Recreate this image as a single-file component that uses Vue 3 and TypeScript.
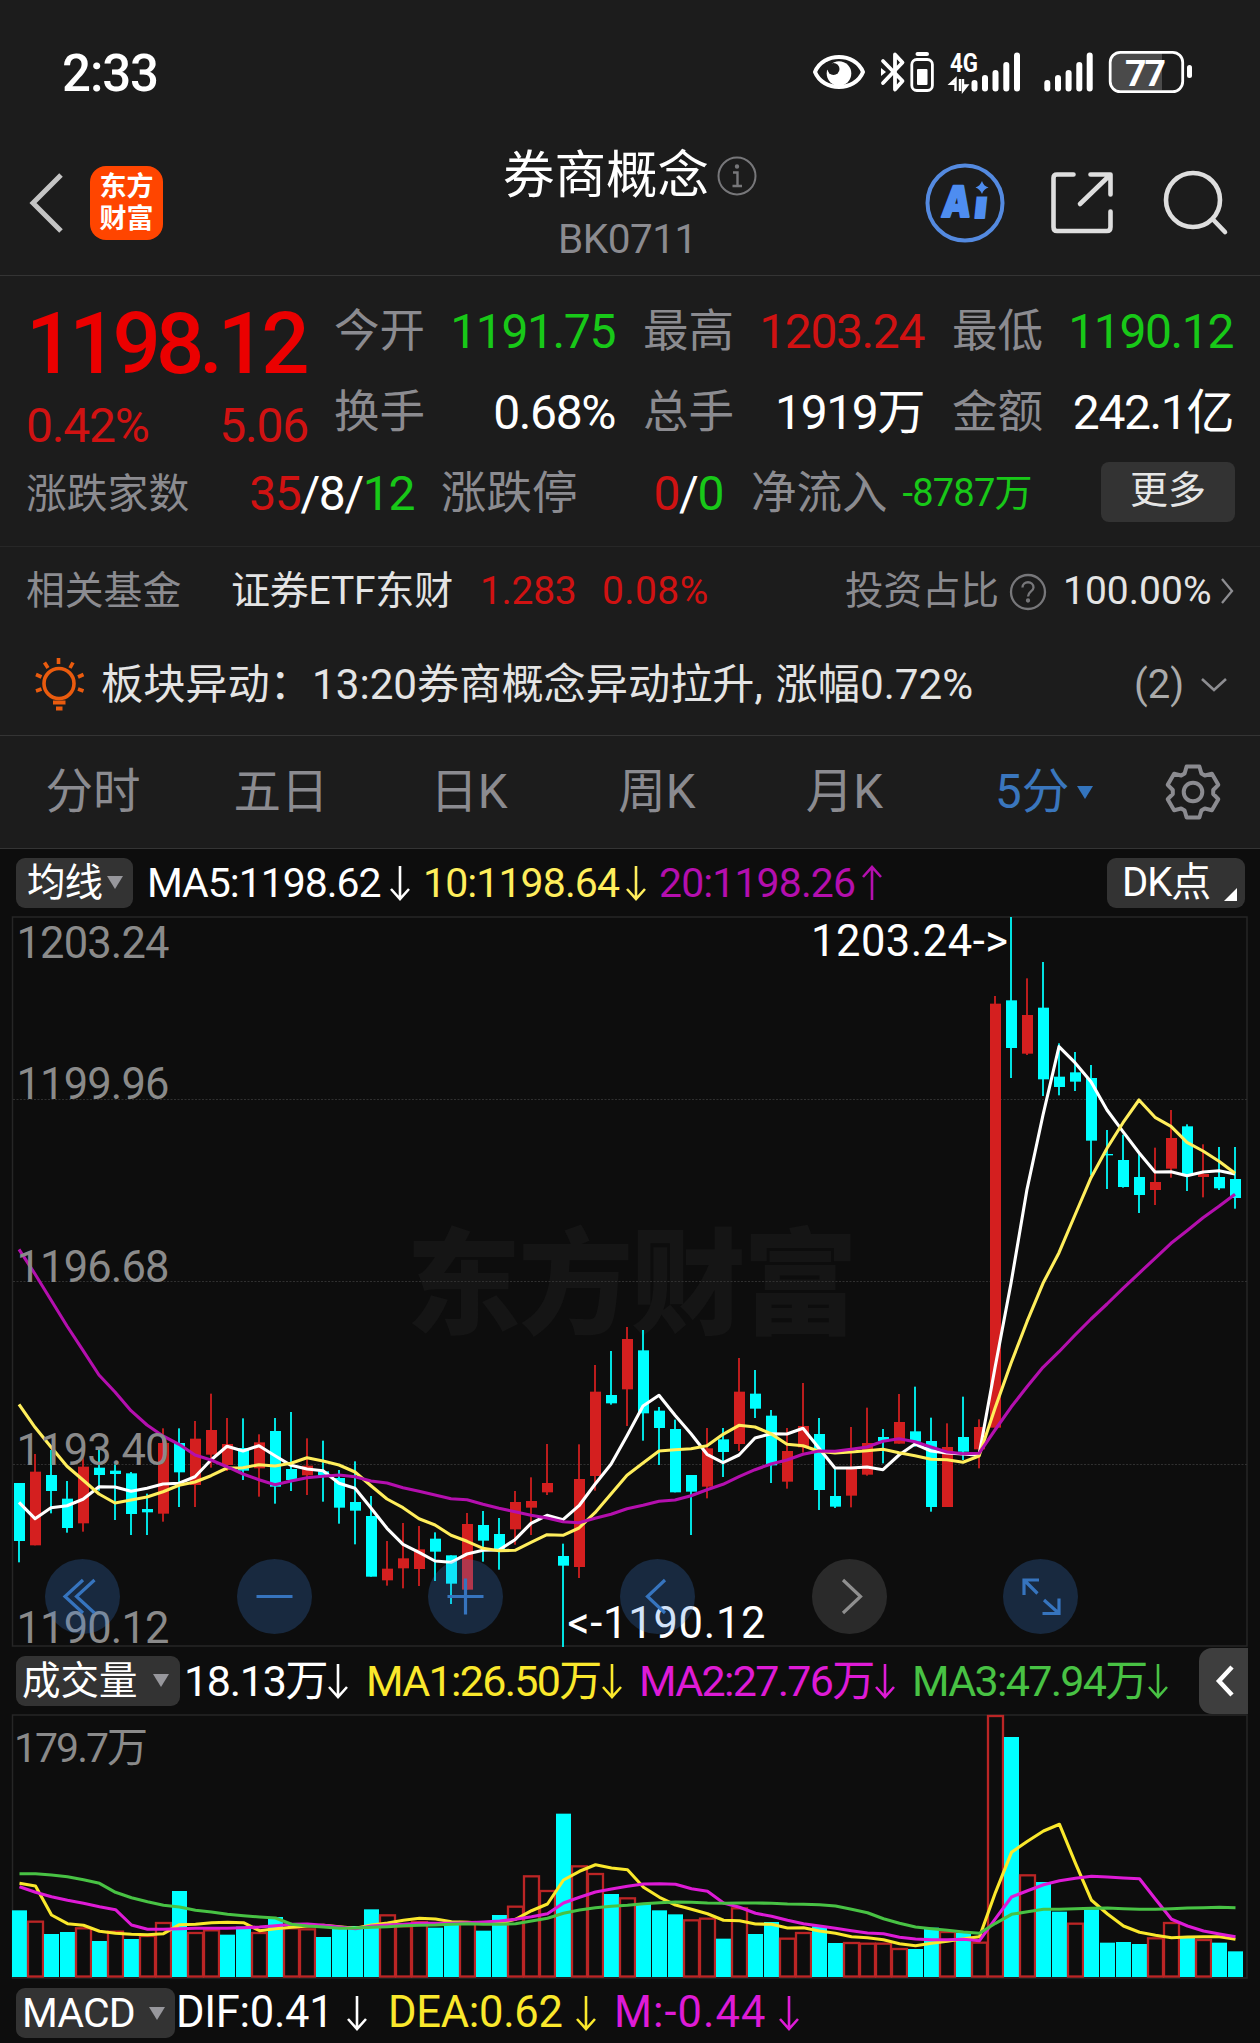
<script setup lang="ts">
import { h, type FunctionalComponent } from 'vue'

type Candle = [up: 0 | 1, high: number, top: number, bottom: number, low: number]

const Arrow: FunctionalComponent<{ up?: boolean }> = (props) =>
  h('svg', { class: 'arrow', viewBox: '0 0 22 36', width: 22, height: 36 }, [
    h('path', {
      d: props.up ? 'M11 35V2M2 12L11 2L20 12' : 'M11 1V34M2 24L11 34L20 24',
      fill: 'none',
      stroke: 'currentColor',
      'stroke-width': 2.6,
    }),
  ])
Arrow.props = { up: Boolean }

const STEP = 16
const candleX = (i: number) => 19 + STEP * i
const volumeX = (i: number) => 19.5 + STEP * i

// Price values are kept in thirds of a pixel, relative to a block's own base line.
const scale = (base: number, values: number[]) => values.map((v) => base + v / 3)

const blocks: { base: number; rows: Candle[] }[] = [
  {
    base: 1220,
    rows: [
      [0, 789, 789, 963, 1027], [1, 702, 755, 976, 976], [0, 690, 765, 813, 880], [0, 783, 836, 924, 938],
      [1, 702, 740, 910, 935], [0, 690, 743, 765, 812], [0, 733, 752, 762, 900], [0, 756, 760, 882, 945],
      [0, 821, 867, 877, 945], [1, 625, 669, 881, 905], [0, 625, 669, 757, 861], [1, 603, 656, 795, 861],
      [1, 521, 630, 704, 743], [1, 594, 672, 735, 753], [0, 595, 684, 752, 780], [1, 643, 667, 745, 830],
      [0, 594, 633, 800, 851], [0, 576, 747, 780, 813], [1, 655, 737, 766, 825], [0, 662, 754, 766, 845],
      [0, 750, 774, 863, 911], [0, 724, 846, 872, 973], [0, 828, 888, 1070, 1070], [1, 963, 1046, 1081, 1097],
      [1, 909, 1015, 1045, 1105],
    ],
  },
  {
    base: 1300,
    rows: [
      [1, 678, 748, 807, 858], [0, 697, 716, 755, 843], [0, 766, 766, 851, 912], [1, 639, 672, 869, 869],
      [0, 633, 675, 722, 785], [0, 654, 702, 750, 809], [1, 573, 606, 688, 734], [1, 532, 603, 623, 705],
      [1, 432, 549, 577, 585], [0, 731, 768, 797, 1041], [1, 433, 537, 801, 834], [1, 195, 275, 528, 572],
      [0, 153, 285, 310, 314], [1, 81, 117, 268, 378], [0, 90, 151, 340, 422], [0, 321, 332, 384, 495],
      [0, 359, 387, 577, 577], [0, 525, 525, 575, 705], [1, 384, 445, 560, 595], [0, 384, 418, 456, 531],
      [1, 174, 275, 432, 453], [0, 210, 281, 326, 354], [0, 330, 347, 496, 549], [1, 384, 453, 545, 566],
      [1, 249, 378, 442, 458], [0, 354, 402, 570, 630], [0, 507, 588, 620, 624], [1, 381, 506, 587, 622],
      [1, 323, 429, 524, 527], [0, 387, 411, 423, 490], [1, 282, 366, 431, 431], [0, 260, 394, 425, 440],
      [0, 353, 423, 621, 635], [1, 370, 441, 621, 621], [0, 290, 411, 455, 480], [1, 358, 381, 448, 505],
    ],
  },
  {
    base: 900,
    rows: [
      [1, 288, 311, 1583, 1583], [0, 51, 301, 444, 534], [1, 235, 345, 461, 465], [0, 186, 323, 538, 588],
      [0, 430, 530, 561, 586], [0, 456, 517, 545, 573], [0, 495, 534, 722, 826], [0, 690, 762, 766, 867],
      [0, 704, 780, 861, 863], [0, 762, 831, 885, 939], [1, 743, 846, 870, 915], [1, 630, 714, 806, 833],
      [0, 673, 679, 822, 873], [1, 733, 822, 831, 892], [0, 741, 831, 865, 870], [0, 741, 837, 894, 926],
    ],
  },
]

const candles = blocks
  .flatMap(({ base, rows }) => rows.map(([up, ...v]) => ({ up: up === 1, v: scale(base, v) })))
  .map(({ up, v }, i) => ({ up, x: candleX(i), high: v[0], top: v[1], bottom: v[2], low: v[3] }))

const toPoints = (ys: number[], x: (i: number) => number) => ys.map((y, i) => `${x(i)},${y.toFixed(1)}`).join(' ')

const priceLines = [
  {
    color: '#ffffff',
    ys: [
      ...scale(1220, [847, 896, 863, 857, 838, 800, 801, 814, 805, 792, 790, 770, 720, 679, 693, 677, 707, 736, 747, 752, 790, 805, 864, 925, 973]),
      ...scale(1300, [757, 783, 787, 762, 751, 750, 719, 670, 646, 659, 617, 553, 493, 407, 318, 286, 346, 401, 463, 488, 465, 414, 401, 402, 385, 445, 504, 504, 501, 509, 465, 432, 453, 459, 462, 466, 203]),
      ...scale(900, [1150, 868, 645, 440, 488, 545, 630, 695, 758, 816, 815, 827, 816, 812, 822]),
    ],
  },
  {
    color: '#ffee5c',
    ys: [
      ...scale(1220, [553, 622, 681, 739, 780, 822, 849, 840, 831, 815, 796, 786, 767, 744, 743, 734, 738, 730, 713, 723, 735, 756, 797, 837, 863]),
      ...scale(1300, [656, 675, 706, 724, 745, 752, 751, 727, 704, 706, 684, 638, 582, 526, 489, 453, 449, 446, 437, 403, 376, 381, 401, 433, 437, 454, 459, 456, 452, 448, 458, 467, 478, 479, 487, 468, 325, 190, 65]),
      ...scale(900, [1150, 1058, 945, 833, 745, 668, 600, 652, 679, 727, 753, 784, 820]),
    ],
  },
  {
    color: '#b40fae',
    ys: [
      ...scale(1220, [88, 162, 240, 318, 391, 465, 516, 572, 615, 648, 673, 705, 720, 740, 762, 779, 794, 783, 773, 769, 765, 770, 783, 789, 803]),
      ...scale(1300, [574, 585, 596, 599, 613, 625, 635, 646, 654, 665, 668, 655, 643, 626, 616, 604, 600, 587, 569, 553, 530, 509, 492, 480, 463, 453, 454, 448, 441, 424, 416, 425, 441, 456, 461, 460, 390, 322, 260, 202, 155, 105, 57, 12]),
      ...scale(900, [1165, 1120, 1075, 1030, 992, 953, 919, 883]),
    ],
  },
].map(({ color, ys }) => ({ color, points: toPoints(ys, candleX) }))

const VOLUME_BASE = 1640
const VOLUME_FLOOR = VOLUME_BASE + 1011 / 3

// Negative entries are rising bars, drawn hollow.
const volumes = [
  811, -842, 882, 876, -862, 903, -872, 897, -885, -846, 753, -876, -868, 884, 860, -876, 831, -862, -865, 891,
  862, 858, 808, -823, -856, -843, 863, 853, -843, 872, 825, -797, -706, -750, 521, -676, -699, 762, -772, 790,
  811, 823, -838, -833, 896, -802, 882, 846, -893, -876, 859, 909, -906, -908, -908, -924, 927, 863, -873, 878,
  -905, -225, 291, -703, 726, 815, -848, 808, 908, 906, 912, -892, -846, 892, -897, 908, 934,
].map((v, i) => ({ up: v < 0, x: volumeX(i), top: VOLUME_BASE + Math.abs(v) / 3 }))

const volumeLines = [
  {
    color: '#fae82c',
    ys: [730, 738, 825, 851, 856, 874, 880, 883, 884, 881, 854, 853, 848, 847, 848, 872, 866, 862, 858, 856, 860, 865, 855, 849, 841, 835, 837, 845, 847, 850, 850, 838, 812, 792, 720, 694, 674, 684, 689, 742, 772, 795, 808, 821, 841, 842, 852, 853, 864, 863, 873, 880, 890, 893, 899, 911, 917, 910, 904, 896, 890, 757, 637, 604, 573, 553, 670, 781, 822, 858, 877, 886, 893, 891, 890, 890, 898],
  },
  {
    color: '#de1bd6',
    ys: [740, 757, 770, 781, 790, 800, 809, 855, 868, 868, 866, 865, 865, 865, 863, 861, 857, 853, 852, 856, 861, 866, 858, 855, 853, 850, 850, 850, 848, 846, 843, 838, 830, 821, 789, 772, 756, 747, 739, 732, 731, 733, 746, 754, 789, 802, 820, 829, 841, 851, 858, 865, 872, 879, 881, 892, 897, 899, 899, 898, 902, 836, 771, 752, 734, 722, 715, 709, 711, 714, 716, 778, 838, 858, 873, 882, 890],
  },
  {
    color: '#48c244',
    ys: [701, 701, 705, 710, 719, 730, 757, 773, 785, 796, 801, 811, 816, 823, 827, 831, 834, 853, 858, 861, 865, 864, 862, 860, 857, 856, 855, 853, 851, 853, 853, 851, 843, 835, 820, 810, 803, 799, 796, 791, 788, 786, 787, 789, 790, 789, 789, 790, 792, 793, 794, 798, 808, 818, 836, 850, 861, 866, 871, 876, 880, 850, 823, 815, 808, 808, 806, 805, 804, 806, 808, 808, 806, 804, 803, 802, 803],
  },
].map(({ color, ys }) => ({ color, points: toPoints(scale(VOLUME_BASE, ys), volumeX) }))

const axis = [
  { text: '1203.24', y: 958 },
  { text: '1199.96', y: 1099 },
  { text: '1196.68', y: 1281.5 },
  { text: '1193.40', y: 1464.5 },
  { text: '1190.12', y: 1643 },
]

const gear = Array.from({ length: 6 }, (_, k) => {
  const a = (k * Math.PI) / 3
  return [[-8.4, -18.5], [-6.4, -25.5], [6.4, -25.5], [8.4, -18.5]]
    .map(([x, y]) => `${(x * Math.cos(a) - y * Math.sin(a)).toFixed(1)},${(x * Math.sin(a) + y * Math.cos(a)).toFixed(1)}`)
    .join(' ')
}).join(' ')

const tabs = ['分时', '五日', '日K', '周K', '月K']

const tools = [
  { name: 'rewind', d: 'M38 21L20 37.500L38 54M49.500 21L31.500 37.500L49.500 54' },
  { name: 'minus', d: 'M19.500 37.500H55.500' },
  { name: 'plus', d: 'M19.500 37.500H55.500M37.500 19.500V55.500' },
  { name: 'prev', d: 'M45 21L27.500 37.500L45 54' },
  { name: 'next', d: 'M31 21L48.500 37.500L31 54' },
  { name: 'expand', d: 'M21 36V21H36M21.500 21.500L34.500 34.500M56 39.500V54.500H39.500M55.500 54L41 41' },
]
</script>

<template>
  <div class="screen">
    <div class="status">
      <span class="clock">2:33</span>
      <svg class="status-icons" width="455" height="70" viewBox="0 0 455 70" fill="none">
        <path d="M10 32C18 12 50 12 58 32C50 52 18 52 10 32Z" stroke="#fff" stroke-width="4" stroke-linejoin="round" />
        <circle cx="34" cy="33.500" r="12.300" fill="#fff" />
        <circle cx="28.500" cy="29" r="6" fill="#1c1c1c" />
        <circle cx="23.500" cy="26" r="4" fill="#1c1c1c" />
        <path d="M78 21L97.500 41L90 49.500V14.500L97.500 22.500L78 43" stroke="#fff" stroke-width="3.800" stroke-linejoin="round" stroke-linecap="round" />
        <path d="M76 28L81 32L76 36Z" fill="#fff" />
        <rect x="110.500" y="12" width="13.500" height="4" rx="2" fill="#fff" />
        <rect x="106.800" y="19.500" width="20.600" height="31" rx="5" stroke="#fff" stroke-width="2.800" />
        <rect x="112" y="29" width="10.500" height="16" rx="1" fill="#fff" />
        <text x="145" y="31.500" font-size="26" font-weight="700" fill="#fff" textLength="28" lengthAdjust="spacingAndGlyphs">4G</text>
        <path d="M150.500 39.500V51L150.500 39L145.500 43.800H150M155 39V51M158 39V50.500L162 45.500H158" stroke="#fff" stroke-width="2.400" />
        <path d="M169.500 43V48.500M180 38V48.500M190.500 33V48.500M201.300 25V48.500M212 15.500V48.500M242.300 43V48.500M253 38V48.500M263.600 33V48.500M274.300 25V48.500M284.700 15.500V48.500" stroke="#fff" stroke-width="6" stroke-linecap="round" />
        <path d="M312 13H357V50H312Q306.500 50 306.500 43V20Q306.500 13 312 13Z" fill="#4a4a4a" />
        <rect x="305.200" y="12.300" width="72.500" height="39.300" rx="10" stroke="#fff" stroke-width="2.800" />
        <rect x="382" y="25" width="5" height="13" rx="2.500" fill="#fff" />
        <text x="320" y="46" font-size="37.500" font-weight="700" fill="#fff" textLength="41">77</text>
      </svg>
    </div>

    <header class="top">
      <svg class="back" width="38" height="64" viewBox="0 0 38 64"><path d="M33 4L5 32L33 60" fill="none" stroke="#c4c4c4" stroke-width="5" /></svg>
      <div class="logo"><span>东方</span><span>财富</span></div>
      <div class="heading">
        <div class="title">
          <span>券商概念</span>
          <svg width="40" height="40" viewBox="0 0 40 40" fill="none" stroke="#77777a" stroke-width="2">
            <circle cx="20" cy="20" r="18.500" />
            <path d="M16 16.500H20.500V29.500M15.500 30H25" stroke-width="2.400" />
            <circle cx="20" cy="10.500" r="1.200" fill="#77777a" />
          </svg>
        </div>
        <div class="code">BK0711</div>
      </div>
      <svg class="actions" width="310" height="80" viewBox="0 0 310 80" fill="none">
        <circle cx="45" cy="40" r="37.500" stroke="#548ae0" stroke-width="4" />
        <g transform="translate(5.500 0) skewX(-6)" fill="#4e8df0" stroke="#4e8df0" stroke-width="2" stroke-linejoin="round" font-family="Inter" font-weight="900" font-size="43">
          <text x="21" y="54" textLength="29" lengthAdjust="spacingAndGlyphs">A</text>
          <text x="53.500" y="55.500" textLength="13" lengthAdjust="spacingAndGlyphs">i</text>
        </g>
        <rect x="53" y="17" width="17" height="16.500" fill="#1c1c1c" />
        <path d="M62 18Q63.500 23 68.500 24.500Q63.500 26 62 31Q60 26 55.500 24.500Q60 23 62 18Z" fill="#4e8df0" />
        <g stroke="#dedede" stroke-width="4.600" stroke-linecap="round" stroke-linejoin="round">
          <path d="M153.500 11.500H137Q133.500 11.500 133.500 15V64Q133.500 68 137 68H187Q190.500 68 190.500 64V48.500M170.500 11.500H190.500V31.500M189 13L160 41" />
          <circle cx="273" cy="37" r="27" />
          <path d="M293 56.500L305 69" />
        </g>
      </svg>
    </header>

    <section class="quote">
      <div class="quote-main">
        <div class="last">
          <div class="price">1198.12</div>
          <div class="change"><span>0.42%</span><span>5.06</span></div>
        </div>
        <div class="facts">
          <div class="fact"><label>今开</label><b class="green">1191.75</b></div>
          <div class="fact"><label>最高</label><b class="red">1203.24</b></div>
          <div class="fact"><label>最低</label><b class="green">1190.12</b></div>
          <div class="fact"><label>换手</label><b>0.68%</b></div>
          <div class="fact"><label>总手</label><b>1919万</b></div>
          <div class="fact"><label>金额</label><b>242.1亿</b></div>
        </div>
      </div>
      <div class="quote-more">
        <div class="fact breadth"><label>涨跌家数</label><b><i class="red">35</i>/8/<i class="green">12</i></b></div>
        <div class="fact limits"><label>涨跌停</label><b><i class="red">0</i>/<i class="green">0</i></b></div>
        <div class="fact inflow"><label>净流入</label><b class="green">-8787万</b></div>
        <button class="more">更多</button>
      </div>
    </section>

    <section class="fund">
      <span class="muted fund-label">相关基金</span>
      <span class="fund-name">证券ETF东财</span>
      <span class="red fund-price">1.283</span>
      <span class="red fund-rate">0.08%</span>
      <span class="muted fund-ratio">投资占比</span>
      <svg class="help" width="38" height="38" viewBox="0 0 38 38" fill="none" stroke="#77777a" stroke-width="2.300">
        <circle cx="19" cy="19" r="17" />
        <path d="M13.500 14.500C13.500 7.500 24.500 7.500 24.500 14.500C24.500 18.500 19 18.500 19 23.500" />
        <circle cx="19" cy="27.500" r="1" />
      </svg>
      <span class="fund-share">100.00%</span>
      <svg class="go" width="14" height="28" viewBox="0 0 14 28"><path d="M2 2L12 14L2 26" fill="none" stroke="#8d8d91" stroke-width="2.300" /></svg>
    </section>

    <section class="alert">
      <svg class="bulb" width="50" height="56" viewBox="0 0 50 56" fill="none" stroke="#ea5b0e" stroke-width="3.600">
        <circle cx="24" cy="26.500" r="15" />
        <path d="M23.500 1V7M9.500 5.500L13 11M38 5.500L35 11M1 17.500L6.500 20M48.500 17.500L43 20M1 34L6.500 32M48.500 34L43 32" />
        <path d="M18 45.500H30.500M21 51.500H27.500" stroke-width="3.800" />
      </svg>
      <span class="alert-tag">板块异动：</span>
      <span class="alert-text">13:20券商概念异动拉升<em>,</em>涨幅0.72%</span>
      <span class="alert-count">(2)</span>
      <svg width="28" height="18" viewBox="0 0 28 18"><path d="M2 3L14 14L26 3" fill="none" stroke="#8d8d91" stroke-width="2.600" /></svg>
    </section>

    <nav class="tabs">
      <span v-for="tab in tabs" :key="tab" class="tab">{{ tab }}</span>
      <span class="tab active">5分<svg width="16" height="13" viewBox="0 0 16 13"><path d="M0 0H16L8 13Z" fill="#3374bd" /></svg></span>
      <svg class="gear" width="60" height="60" viewBox="-30 -30 60 60" fill="none" stroke="#8b8b90" stroke-width="4">
        <polygon :points="gear" stroke-linejoin="round" />
        <circle r="9.300" />
      </svg>
    </nav>

    <section class="charts">
      <div class="legend ma">
        <span class="pill">均线<svg width="16" height="13" viewBox="0 0 16 13"><path d="M0 0H16L8 13Z" fill="#97979c" /></svg></span>
        <span class="item i1">MA5:1198.62<Arrow /></span>
        <span class="item i2">10:1198.64<Arrow /></span>
        <span class="item i3">20:1198.26<Arrow up /></span>
        <span class="pill dk">DK点<svg width="13" height="13" viewBox="0 0 13 13"><path d="M13 0V13H0Z" fill="#fff" /></svg></span>
      </div>

      <div class="price-chart">
        <svg width="1260" height="731" viewBox="0 916 1260 731">
          <g class="watermark"><text x="406" y="1325" textLength="452">东方财富</text></g>
          <g fill="none" stroke="#262626">
            <rect x="12.500" y="917" width="1234.500" height="729" stroke-width="1.500" />
            <path d="M13 1099.500H1247M13 1281.500H1247M13 1464.500H1247" stroke="#303030" stroke-dasharray="2 1.500" />
          </g>
          <g v-for="c in candles" :key="c.x" :fill="c.up ? '#d41f1f' : '#00ffff'">
            <rect :x="c.x - 1" :y="c.high" width="2" :height="c.low - c.high" :opacity="0.88" />
            <rect :x="c.x - 5" :y="c.top" width="11" :height="c.bottom - c.top" />
          </g>
          <polyline v-for="l in priceLines" :key="l.color" :points="l.points" :stroke="l.color" class="line" />
          <text v-for="a in axis" :key="a.text" :x="16.500" :y="a.y" class="axis" textLength="153">{{ a.text }}</text>
          <text x="811" y="955.700" class="mark" textLength="197">1203.24-&gt;</text>
          <text x="567.500" y="1638" class="mark" textLength="198">&lt;-1190.12</text>
        </svg>
        <div class="tools">
          <svg v-for="t in tools" :key="t.name" class="tool" :class="t.name" width="75" height="75" viewBox="0 0 75 75">
            <path :d="t.d" fill="none" stroke="currentColor" stroke-width="3.200" />
          </svg>
        </div>
      </div>

      <div class="legend vol">
        <span class="pill">成交量<svg width="16" height="13" viewBox="0 0 16 13"><path d="M0 0H16L8 13Z" fill="#97979c" /></svg></span>
        <span class="item v0">18.13万<Arrow /></span>
        <span class="item v1">MA1:26.50万<Arrow /></span>
        <span class="item v2">MA2:27.76万<Arrow /></span>
        <span class="item v3">MA3:47.94万<Arrow /></span>
        <span class="drawer"><svg width="20" height="34" viewBox="0 0 20 34"><path d="M17 3L4 17L17 31" fill="none" stroke="#fff" stroke-width="4.500" /></svg></span>
      </div>

      <svg class="volume-chart" width="1260" height="265" viewBox="0 1714 1260 265">
        <rect x="12.500" y="1715" width="1234.500" height="263" fill="none" stroke="#262626" stroke-width="1.500" />
        <text x="14" y="1762" class="axis small" textLength="134">179.7万</text>
        <template v-for="b in volumes" :key="b.x">
          <rect v-if="b.up" :x="b.x - 7.500" :y="b.top + 1" width="15" :height="VOLUME_FLOOR - b.top - 1.500" fill="#0d0d0d" stroke="#bb2525" stroke-width="2.300" />
          <rect v-else :x="b.x - 7.500" :y="b.top" width="15" :height="VOLUME_FLOOR - b.top" fill="#00ffff" />
        </template>
        <polyline v-for="l in volumeLines" :key="l.color" :points="l.points" :stroke="l.color" class="line" />
      </svg>

      <div class="legend macd">
        <span class="pill">MACD<svg width="16" height="13" viewBox="0 0 16 13"><path d="M0 0H16L8 13Z" fill="#97979c" /></svg></span>
        <span class="item m0">DIF:0.41<Arrow /></span>
        <span class="item m1">DEA:0.62<Arrow /></span>
        <span class="item m2">M:-0.44<Arrow /></span>
      </div>
    </section>
  </div>
</template>

<style>
body {
  background: #0d0d0d;
}
</style>

<style scoped>
.screen {
  width: 1260px;
  height: 2043px;
  overflow: hidden;
  background: #1c1c1c;
  color: #e4e4e4;
  font-family: Roboto, 'Noto Sans CJK SC', sans-serif;
  font-size: 40px;
  line-height: 1;
  white-space: nowrap;
}
.screen * {
  box-sizing: border-box;
}
svg {
  display: block;
  flex: none;
}
b,
i,
em {
  font-weight: 400;
  font-style: normal;
}
.red { color: #d01212; }
.green { color: #18c818; }
.muted { color: #8b8b90; }

.status {
  display: flex;
  justify-content: space-between;
  height: 127px;
  padding: 40px 0 0 62px;
}
.clock {
  padding-top: 8px;
  font-size: 51px;
  font-weight: 500;
  letter-spacing: -1.100px;
  color: #fff;
}

.top {
  display: flex;
  height: 149px;
  border-bottom: 1.500px solid #343434;
}
.back { margin: 44px 0 0 28px; }
.logo {
  display: flex;
  flex-direction: column;
  align-items: center;
  gap: 4px;
  width: 73px;
  height: 74px;
  margin: 39px 0 0 24px;
  padding-top: 7px;
  border-radius: 16px;
  background: #ff4500;
  color: #fff;
  font-size: 27px;
  font-weight: 700;
}
.logo span { line-height: 28px; }
.heading {
  width: 270px;
  margin-left: 340px;
}
.title {
  display: flex;
  align-items: center;
  gap: 8px;
  height: 56px;
  margin-top: 21px;
  font-size: 51.500px;
  color: #fff;
}
.title span { height: 56px; line-height: 56px; }
.code {
  margin: 15px 0 0 55px;
  font-size: 40.500px;
  letter-spacing: -0.500px;
  color: #8b8b90;
}
.actions { margin: 36px 0 0 147px; }

.quote {
  height: 271px;
  padding-top: 15px;
  border-bottom: 1.500px solid #272727;
}
.quote-main { display: flex; height: 161px; }
.last { width: 308px; padding-left: 26px; }
.price {
  height: 102px;
  line-height: 106px;
  font-size: 85px;
  font-weight: 500;
  letter-spacing: -5px;
  color: #eb0000;
}
.change {
  display: flex;
  justify-content: space-between;
  height: 62px;
  line-height: 66px;
  font-size: 48px;
  letter-spacing: -1.200px;
  color: #d01212;
}
.facts {
  display: grid;
  grid-template-columns: 281px 281px 281px;
  grid-auto-rows: 81px;
  column-gap: 28px;
  margin-left: 26px;
}
.fact {
  display: flex;
  justify-content: space-between;
  align-items: center;
  line-height: 81px;
  font-size: 48px;
}
.fact label {
  margin-top: 1px;
  font-size: 45.500px;
  line-height: 80px;
  color: #8b8b90;
}
.fact b { letter-spacing: -1.400px; color: #fff; }
.fact b.red { color: #d01212; }
.fact b.green { color: #18c818; }
.quote-more {
  display: flex;
  align-items: center;
  height: 81px;
  padding: 2px 25px 0 26px;
}
.breadth { width: 388px; }
.breadth label { font-size: 40.800px; }
.limits { width: 282px; margin-left: 27px; }
.inflow { margin-left: 28px; }
.inflow b { margin-left: 15px; font-size: 38px; letter-spacing: -0.800px; }
.more {
  width: 134px;
  height: 60px;
  margin: 0 0 4px auto;
  padding: 0 0 4px;
  border: 0;
  border-radius: 8px;
  background: #333;
  color: #e6e6e6;
  font: 38px/52px Roboto, 'Noto Sans CJK SC', sans-serif;
}

.fund {
  display: flex;
  align-items: center;
  height: 87px;
  padding-left: 26px;
  font-size: 39px;
  line-height: 84px;
}
.fund-label { width: 205px; font-size: 38.800px; }
.fund-name { width: 249px; letter-spacing: -0.200px; }
.fund-price { width: 122px; letter-spacing: -0.300px; }
.fund-rate { width: 243px; letter-spacing: 0.400px; }
.fund-ratio { width: 164px; font-size: 38.500px; }
.help { margin-top: 2px; }
.fund-share { width: 159px; margin-left: 16px; letter-spacing: 0; }
.go { margin-left: -2px; }

.alert {
  display: flex;
  align-items: center;
  height: 102px;
  padding-left: 35px;
  border-bottom: 1.500px solid #343434;
  font-size: 42.200px;
  line-height: 100px;
}
.alert-tag { width: 211px; margin-left: 16px; }
.alert-text { width: 822px; }
.alert-text em { display: inline-block; width: 21px; }
.alert-count { width: 66px; font-size: 40px; color: #aaa; }

.tabs {
  display: flex;
  align-items: center;
  height: 113px;
  border-bottom: 1.500px solid #343434;
  font-size: 47.500px;
  line-height: 110px;
  color: #8b8b90;
}
.tab { width: 188px; text-align: center; }
.tab:first-child { margin-left: -1px; }
.tab:nth-child(5) { width: 187px; }
.tab.active {
  display: flex;
  align-items: center;
  gap: 8px;
  width: 168px;
  margin-left: 57px;
  color: #3a76bd;
}
.gear { margin-top: -1px; }

.charts { background: #0d0d0d; }
.legend {
  display: flex;
  align-items: center;
  padding-left: 16px;
  color: #fff;
}
.pill {
  display: flex;
  align-items: center;
  justify-content: space-between;
  height: 50px;
  border-radius: 9px;
  background: #333;
  line-height: 46px;
  font-size: 38.500px;
}
.item { display: flex; align-items: center; }
.ma { height: 67px; padding-right: 15px; font-size: 41px; letter-spacing: -1.050px; line-height: 66px; }
.ma .pill { width: 117px; padding: 0 10px 0 11px; letter-spacing: -1px; }
.ma .dk { width: 138px; margin-left: auto; padding: 0 8px 0 15px; font-size: 40px; line-height: 46px; }
.ma .dk svg { margin-top: 24px; }
.ma .item { justify-content: space-between; }
.ma .i1 { width: 264px; margin-left: 14px; }
.ma .i2 { width: 224px; margin-left: 12px; letter-spacing: -0.900px; color: #ffee5c; }
.ma .i3 { width: 224px; margin-left: 12px; letter-spacing: -0.900px; color: #b40fae; }

.price-chart { position: relative; height: 731px; }
.watermark text {
  font-family: 'Noto Sans CJK SC', sans-serif;
  font-size: 115px;
  font-weight: 900;
  fill: #151515;
}
.line { fill: none; stroke-width: 3.100; stroke-linejoin: round; }
.axis { font-size: 43.500px; fill: #8a8a8a; }
.axis.small { font-size: 41px; }
.mark { font-size: 43.500px; fill: #fff; }
.tools {
  position: absolute;
  left: 45px;
  top: 643px;
  display: flex;
  gap: 116.700px;
}
.tool {
  border-radius: 50%;
  background: rgba(62, 133, 230, 0.23);
  color: #3674be;
}
.tool.next { background: rgba(160, 160, 160, 0.2); color: #8f8f8f; }

.vol { height: 67px; font-size: 43px; letter-spacing: -1.700px; line-height: 66px; }
.vol .pill { width: 164px; padding: 0 11px 0 6px; letter-spacing: 0; }
.vol .item { justify-content: space-between; }
.vol .v0 { width: 163px; margin-left: 4px; letter-spacing: -1.300px; }
.vol .v1 { width: 255px; margin-left: 19px; color: #fae82c; }
.vol .v2 { width: 255px; margin-left: 18px; color: #de1bd6; }
.vol .v3 { width: 255px; margin-left: 18px; color: #48c244; }
.drawer {
  display: flex;
  align-items: center;
  justify-content: flex-end;
  width: 49px;
  height: 66px;
  margin-left: 32px;
  padding-right: 13px;
  border-radius: 13px 0 0 13px;
  background: #3e3e3e;
}

.macd { height: 68px; font-size: 43.500px; letter-spacing: -0.300px; line-height: 68px; }
.macd .pill { width: 159px; padding: 0 10px 0 6px; font-size: 41px; letter-spacing: -0.900px; }
.macd .item { justify-content: space-between; }
.macd .m0 { width: 192px; margin-left: 1px; }
.macd .m1 { width: 209px; margin-left: 20px; color: #fae82c; }
.macd .m2 { width: 186px; margin-left: 17px; letter-spacing: 1px; color: #de1bd6; }
</style>
